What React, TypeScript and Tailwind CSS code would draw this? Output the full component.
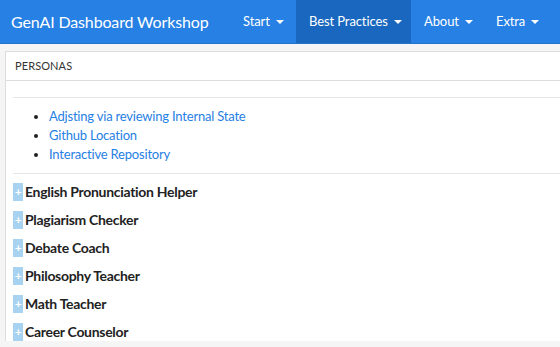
const font = { fontFamily: '"Lato", "Open Sans", sans-serif' };

function Caret() {
  return (
    <span className="ml-[6px] inline-block h-0 w-0 border-x-[4px] border-t-[4px] border-x-transparent border-t-white" />
  );
}

export default function App() {
  const navItems = [
    { name: "Start", active: false, w: "w-[66px]" },
    { name: "Best Practices", active: true, w: "w-[115px]" },
    { name: "About", active: false, w: "w-[72px]" },
    { name: "Extra", active: false, w: "w-[66px]" },
  ];

  const links = [
    "Adjsting via reviewing Internal State",
    "Github Location",
    "Interactive Repository",
  ];

  const personas = [
    "English Pronunciation Helper",
    "Plagiarism Checker",
    "Debate Coach",
    "Philosophy Teacher",
    "Math Teacher",
    "Career Counselor",
  ];

  return (
    <div className="h-[347px] w-[560px] overflow-hidden bg-[#f5f5f5] text-[#333]" style={font}>
      {/* Navbar */}
      <nav className="flex h-[44px] items-stretch whitespace-nowrap border-b border-[#2474cc] bg-[#2780e3]">
        <div className="flex w-[230px] shrink-0 items-center pl-[11px] text-[16px] tracking-[-0.15px] text-white">
          GenAI Dashboard Workshop
        </div>
        <ul className="flex items-stretch text-[13px] tracking-[-0.1px] text-white">
          {navItems.map((item) => (
            <li
              key={item.name}
              className={
                "flex shrink-0 items-center pl-[13px] " +
                item.w +
                (item.active ? " bg-[#1967be]" : "")
              }
            >
              {item.name}
              <Caret />
            </li>
          ))}
        </ul>
      </nav>

      {/* Panel */}
      <div className="ml-[5px] mt-[7px] border-l border-t border-[#ddd] bg-white">
        <div className="flex h-[29px] items-center border-b border-[#ddd] pl-[9px] text-[11px] tracking-[0.1px] text-[#333]">
          PERSONAS
        </div>
        <div className="pl-[7px]">
          <hr className="mt-[16px] border-t border-[#e6e6e6]" />
          <ul className="list-disc pl-[36px] pt-[9px] pb-[9px] text-[13px] leading-[19px] tracking-[-0.2px] text-[#2780e3] marker:text-[#222]">
            {links.map((l) => (
              <li key={l}>{l}</li>
            ))}
          </ul>
          <hr className="border-t border-[#e6e6e6]" />
          <div className="flex flex-col gap-[10px] pt-[9px]">
            {personas.map((p) => (
              <div key={p} className="flex items-center whitespace-nowrap text-[14px] font-bold leading-[18px] tracking-[-0.3px] text-[#222]">
                <span className="flex h-[18px] w-[10px] shrink-0 items-center justify-center bg-[#a7d3f1] text-[12px] font-bold leading-none text-white">
                  +
                </span>
                <span className="ml-[2px]">{p}</span>
              </div>
            ))}
          </div>
        </div>
      </div>
    </div>
  );
}
